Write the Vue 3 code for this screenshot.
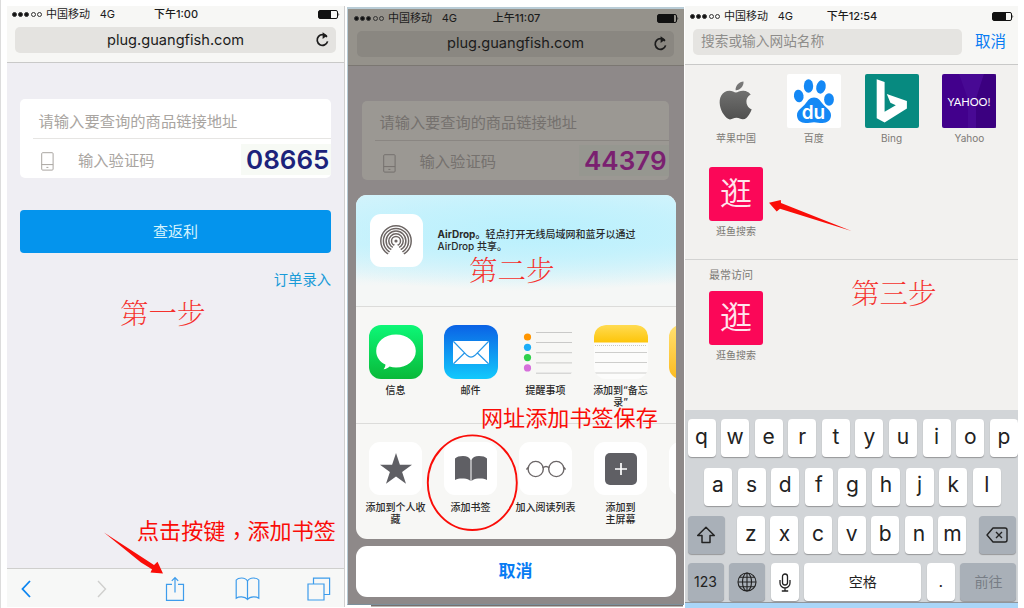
<script setup>
const rows = ['qwertyuiop', 'asdfghjkl', 'zxcvbnm'].map((r) => r.split(''))
const phones = [
  { key: 'first', time: '下午1:00', code: '08665', level: 12 },
  { key: 'second', time: '上午11:07', code: '44379', level: 16 },
]
const rings = [4.5, 7.2, 9.9, 12.6, 15.2]
const dotColors = ['#ff9500', '#1badf8', '#2fd04b', '#d66fdb']
</script>

<template>
  <div class="page">
    <section v-for="p in phones" :key="p.key" class="phone" :class="p.key">
      <header class="top">
        <div class="status">
          <div class="carrier">
            <i class="dot full"></i><i class="dot full"></i><i class="dot full"></i><i class="dot"></i><i class="dot"></i>
            <span class="name">中国移动</span><span>4G</span>
          </div>
          <span class="time">{{ p.time }}</span>
          <svg class="battery" width="22" height="9" viewBox="0 0 22 9">
            <rect x=".5" y=".5" width="19" height="8" rx="1.5" fill="none" stroke="currentColor" />
            <rect x="1" y="1" :width="p.level" height="7" fill="currentColor" />
            <path d="M20.5 2.8q1.5 1.7 0 3.4z" fill="currentColor" />
          </svg>
        </div>
        <div class="address">
          <span>plug.guangfish.com</span>
          <svg class="reload" width="15" height="16" viewBox="0 0 15 16">
            <path d="M11.9 5.1A5.3 5.3 0 1 0 12.6 9.4" fill="none" stroke="currentColor" stroke-width="1.7" />
            <path d="M7.6.2 12.3 3.6 7.6 7z" fill="currentColor" />
          </svg>
        </div>
      </header>
      <main class="content">
        <div class="form">
          <div class="field link">请输入要查询的商品链接地址</div>
          <div class="field verify">
            <svg width="13" height="19" viewBox="0 0 13 19" fill="none" stroke="currentColor">
              <rect x=".7" y=".7" width="11.4" height="17.4" rx="1" /><path d="M.7 12.6h11.4M5.4 15.4h2" />
            </svg>
            <span>输入验证码</span>
            <b class="captcha">{{ p.code }}</b>
          </div>
        </div>
        <template v-if="p.key === 'first'">
          <div class="submit">查返利</div>
          <div class="order">订单录入</div>
        </template>
      </main>
      <nav v-if="p.key === 'first'" class="toolbar">
        <svg width="10" height="18" viewBox="0 0 10 18"><path d="M9 1 1.5 9 9 17" fill="none" stroke="#0a84f0" stroke-width="1.8" /></svg>
        <svg class="forward" width="10" height="18" viewBox="0 0 10 18"><path d="M1 1 8.5 9 1 17" fill="none" stroke="#cfcfcd" stroke-width="1.4" /></svg>
        <svg class="share" width="20" height="26" viewBox="0 0 20 26" fill="none" stroke="#3d9cec" stroke-width="1.2"><path d="M7 8.3H1.5V24.4h17V8.3H13M10 16.5V1.5M6.8 4.8 10 1.5l3.2 3.3" /></svg>
        <svg class="book" width="25" height="24" viewBox="0 0 25 24" fill="none" stroke="#3d9cec" stroke-width="1.2"><path d="M12.5 4.2C11.2 1.5 9 1 6.6 1S2.2 1.7 1.2 3v18.2c1.4-1 3.4-1.4 5.4-1.3 2.5.1 4.6.8 5.9 2.6 1.3-1.8 3.4-2.5 5.9-2.6 2-.1 4 .3 5.4 1.3V3c-1-1.3-3-2-5.4-2s-4.6.5-5.900 3.200zV22" /></svg>
        <svg class="tabs" width="24" height="24" viewBox="0 0 24 24" fill="none" stroke="#3d9cec" stroke-width="1.2"><path d="M1 7h16v16H1zM6.500 7V1.200H22.600V17.500H17" /></svg>
      </nav>

      <div v-if="p.key === 'second'" class="overlay">
        <div class="sheet">
          <div class="airdrop">
            <div class="tile">
              <svg width="36" height="36" viewBox="-18 -18 36 36" fill="none" stroke="#6d6664" stroke-width="1.500">
                <circle v-for="r in rings" :key="r" :r="r" />
                <path d="M0 2 11.500 18H-11.500z" fill="#fff" stroke="none" />
                <circle r="1.600" fill="#6d6664" stroke="none" />
              </svg>
            </div>
            <p><b>AirDrop。</b>轻点打开无线局域网和蓝牙以通过<br />AirDrop 共享。</p>
          </div>
          <div class="apps">
            <div class="app">
              <div class="icon messages">
                <svg width="54" height="54" viewBox="0 0 54 54"><path d="M27 9.500c11.300 0 19.800 7.200 19.800 16.500S38.300 42.500 27 42.500c-2.400 0-4.500-.3-6.400-.9-1.600 1.600-3.400 2.500-6 2.600 1.200-1.300 1.900-2.700 1.800-4.600C10.800 36.900 7.200 31.800 7.200 26 7.200 16.700 15.700 9.500 27 9.500z" fill="#fff" /></svg>
              </div>
              <span>信息</span>
            </div>
            <div class="app">
              <div class="icon mail">
                <svg width="54" height="54" viewBox="0 0 54 54"><rect x="9" y="16" width="36" height="23" rx="1.500" fill="#fff" /><path d="M9.500 16.500 23 30.300q4 3.500 8 0L44.500 16.500M9.500 38.700 20.500 28M44.500 38.700 33.500 28" fill="none" stroke="#2596e8" stroke-width="1.200" /></svg>
              </div>
              <span>邮件</span>
            </div>
            <div class="app">
              <div class="icon">
                <svg width="54" height="54" viewBox="0 0 54 54">
                  <circle v-for="(c, i) in dotColors" :key="c" cx="8.500" :cy="12 + i * 10.300" r="3.600" :fill="c" />
                  <path d="M17 7.500h36M17 17.500h36M17 27.700h36M17 37.900h36M17 48.200h36" stroke="#c9c9c8" />
                </svg>
              </div>
              <span>提醒事项</span>
            </div>
            <div class="app">
              <div class="icon notes">
                <svg width="54" height="54" viewBox="0 0 54 54"><path d="M0 17.500V12Q0 0 12 0H42Q54 0 54 12v5.500z" fill="url(#memo)" /><path d="M1 27.500h52M1 37.500h52M1 48h52" stroke="#cececc" /><path d="M1 20.500h52" stroke="#c6c6c4" stroke-dasharray="1 1" /><defs><linearGradient id="memo" x2="0" y2="1"><stop stop-color="#ffdb52" /><stop offset="1" stop-color="#fdc509" /></linearGradient></defs></svg>
              </div>
              <span>添加到“备忘<br />录”</span>
            </div>
            <div class="app"><div class="icon folder"></div></div>
          </div>
          <div class="apps actions">
            <div class="app">
              <div class="tile"><svg width="32" height="31" viewBox="0 0 32 31"><path d="m16 0 3.900 11.700H32l-9.900 7.200 3.900 11.800-10-7.300-10 7.300 3.900-11.800L0 11.700h12.100z" fill="#5f5f64" /></svg></div>
              <span>添加到个人收<br />藏</span>
            </div>
            <div class="app">
              <div class="tile"><svg width="32" height="26" viewBox="0 0 32 26" fill="#5f5f64"><path d="M15.500 25V4C14.500 1.500 12 0 8 0 4.500 0 1.500.8 0 2.500V24c3-1.500 6-1.800 9-1.400 2.800.3 5 .9 6.500 2.400zM16.500 25V4c1-2.500 3.500-4 7.500-4 3.500 0 6.500.8 8 2.500V24c-3-1.500-6-1.800-9-1.400-2.800.3-5 .9-6.500 2.400z" /></svg></div>
              <span>添加书签</span>
            </div>
            <div class="app">
              <div class="tile"><svg width="40" height="18" viewBox="0 0 40 18" fill="none" stroke="#6b6667" stroke-width="1.400"><circle cx="9.700" cy="9" r="7.600" /><circle cx="30.300" cy="9" r="7.600" /><path d="M16.800 8q3.200-3 6.400 0M2 7.500.5 9.500M38 7.500l1.500 2" /></svg></div>
              <span>加入阅读列表</span>
            </div>
            <div class="app">
              <div class="tile"><svg width="32" height="32" viewBox="0 0 32 32"><rect width="32" height="32" rx="5" fill="#5f5f64" /><path d="M16 10v12M10 16h12" stroke="#fff" stroke-width="1.700" /></svg></div>
              <span>添加到<br />主屏幕</span>
            </div>
            <div class="app"><div class="tile"></div></div>
          </div>
        </div>
        <div class="cancel">取消</div>
      </div>
    </section>

    <section class="phone third">
      <header class="top">
        <div class="status">
          <div class="carrier">
            <i class="dot full"></i><i class="dot full"></i><i class="dot full"></i><i class="dot"></i><i class="dot"></i>
            <span class="name">中国移动</span><span>4G</span>
          </div>
          <span class="time">下午12:54</span>
          <svg class="battery" width="22" height="9" viewBox="0 0 22 9">
            <rect x=".5" y=".5" width="19" height="8" rx="1.500" fill="none" stroke="currentColor" />
            <rect x="1" y="1" width="13" height="7" fill="currentColor" />
            <path d="M20.500 2.800q1.500 1.700 0 3.400z" fill="currentColor" />
          </svg>
        </div>
        <div class="searchbar"><div class="search">搜索或输入网站名称</div><span>取消</span></div>
      </header>
      <div class="favorites">
        <div class="site">
          <svg width="54" height="54" viewBox="0 0 54 54">
            <defs><linearGradient id="steel" x2="0" y2="1"><stop stop-color="#7b7b7a" /><stop offset="1" stop-color="#50504f" /></linearGradient></defs>
            <path transform="translate(7 7.500) scale(1.640 1.580)" fill="url(#steel)" d="M12.152 6.896c-.948 0-2.415-1.078-3.960-1.040-2.040.027-3.910 1.183-4.961 3.014-2.117 3.675-.546 9.103 1.519 12.090 1.013 1.454 2.208 3.090 3.792 3.039 1.520-.065 2.090-.987 3.935-.987 1.831 0 2.350.987 3.960.948 1.637-.026 2.676-1.480 3.676-2.948 1.156-1.688 1.636-3.325 1.662-3.415-.039-.013-3.182-1.221-3.220-4.857-.026-3.040 2.480-4.494 2.597-4.559-1.429-2.090-3.623-2.324-4.390-2.376-2-.156-3.675 1.090-4.610 1.090zM15.530 3.830c.843-1.012 1.400-2.427 1.245-3.830-1.207.052-2.662.805-3.532 1.818-.780.896-1.454 2.338-1.273 3.714 1.338.104 2.715-.688 3.560-1.702" />
          </svg>
          <span>苹果中国</span>
        </div>
        <div class="site">
          <svg width="54" height="54" viewBox="0 0 54 54">
            <rect width="54" height="54" rx="2" fill="#fff" />
            <g fill="#1488f5">
              <ellipse cx="21.500" cy="12" rx="4.700" ry="6.700" /><ellipse cx="34" cy="13" rx="4.700" ry="6.700" transform="rotate(12 34 13)" />
              <ellipse cx="11.700" cy="22" rx="4.800" ry="6.300" transform="rotate(-10 11.700 22)" /><ellipse cx="42" cy="25.500" rx="4.900" ry="6.200" />
              <path d="M27 23.500c4.500 0 6.200 3.300 8.800 6.600 2.700 3.400 8.200 6 8.200 11.200 0 5-3.800 7.700-8.500 7.700-3.500 0-5.500-.8-8.500-.8s-5 .8-8.500.8c-4.700 0-8.500-2.700-8.500-7.700 0-5.200 5.500-7.800 8.200-11.200 2.600-3.300 4.300-6.600 8.800-6.600z" />
            </g>
            <text x="26.500" y="45" text-anchor="middle" class="du">du</text>
          </svg>
          <span>百度</span>
        </div>
        <div class="site">
          <svg width="54" height="54" viewBox="0 0 54 54"><rect width="54" height="54" rx="2" fill="#078a80" /><path d="M11.700 5.300 19.600 8.100V37.800L30.800 31.300 25.400 28.800 21.800 20 41.900 27V34.500L19.600 48.600 11.700 44.200z" fill="#fff" /></svg>
          <span>Bing</span>
        </div>
        <div class="site">
          <svg width="54" height="54" viewBox="0 0 54 54"><rect width="54" height="54" rx="2" fill="#42008c" /><path d="M17 0 26 25V54H34V25L42 0z" fill="#4d0f99" opacity=".6" /><path d="M34 25 42 0H54V54H34z" fill="#370078" opacity=".6" /><text x="27" y="31.500" text-anchor="middle" class="yahoo" textLength="43" lengthAdjust="spacingAndGlyphs">YAHOO!</text></svg>
          <span>Yahoo</span>
        </div>
        <div class="site"><div class="guang">逛</div><span>逛鱼搜索</span></div>
      </div>
      <div class="frequent">
        <h3>最常访问</h3>
        <div class="site"><div class="guang">逛</div><span>逛鱼搜索</span></div>
      </div>
      <div class="keyboard">
        <div class="keys"><span v-for="k in rows[0]" :key="k" class="keycap">{{ k }}</span></div>
        <div class="keys middle"><span v-for="k in rows[1]" :key="k" class="keycap">{{ k }}</span></div>
        <div class="keys third-row">
          <span class="keycap dark shift"><svg width="20" height="18" viewBox="0 0 20 18"><path d="M10 1.200 18.300 9.500H14V16.500H6V9.500H1.700z" fill="none" stroke="#222" stroke-width="1.500" stroke-linejoin="round" /></svg></span>
          <div class="letters"><span v-for="k in rows[2]" :key="k" class="keycap">{{ k }}</span></div>
          <span class="keycap dark shift"><svg width="22" height="16" viewBox="0 0 22 16" fill="none" stroke="#222" stroke-width="1.400"><path d="M7 1h12q2 0 2 2v10q0 2-2 2H7L1 8z" stroke-linejoin="round" /><path d="m10 5 6 6m0-6-6 6" /></svg></span>
        </div>
        <div class="keys bottom">
          <span class="keycap dark num">123</span>
          <span class="keycap dark globe"><svg width="20" height="20" viewBox="0 0 20 20" fill="none" stroke="#222" stroke-width="1.100"><circle cx="10" cy="10" r="9" /><ellipse cx="10" cy="10" rx="4.500" ry="9" /><path d="M10 1v18M1 10h18M2.500 5.200h15M2.500 14.800h15" /></svg></span>
          <span class="keycap"><svg width="12" height="19" viewBox="0 0 12 19" fill="none" stroke="#222" stroke-width="1.300"><rect x="3.500" y="1" width="5" height="11" rx="2.500" /><path d="M1 7v3a5 5 0 0 0 10 0V7M6 15v3M2.800 18h6.400" /></svg></span>
          <span class="keycap space">空格</span>
          <span class="keycap period">.</span>
          <span class="keycap dark go">前往</span>
        </div>
      </div>
    </section>

    <div class="notes-layer">
      <svg width="1024" height="608" viewBox="0 0 1024 608" fill="#fa0d08">
        <path d="M371 605h312v1.500H371z" fill="#77706c" />
        <path d="M104 532.500 154 565 157.500 561.800 163 573.500 150.500 572.500 152 569.300 141 562.500z" />
        <path d="M851.500 231 781 203 780.800 200 769 202.700 776.700 211.500 780 208.800z" />
        <ellipse cx="472.300" cy="482.700" rx="44.500" ry="47.300" fill="none" stroke="#fa0d08" stroke-width="1.900" />
      </svg>
      <p class="step one">第一步</p>
      <p class="step two">第二步</p>
      <p class="step three">第三步</p>
      <p class="tip press">点击按键<span class="comma">，</span>添加书签</p>
      <p class="tip save">网址添加书签保存</p>
    </div>
  </div>
</template>

<style>
body { margin: 0; background: #fff; }
</style>

<style scoped>
* { box-sizing: border-box; }
svg { display: block; flex: none; }
p, h3 { margin: 0; }
.page { position: relative; width: 1024px; height: 608px; overflow: hidden; display: flex; padding: 6px 0 0 6px; background: #fff; border-left: 1px solid #dcdcdc; font-family: Inter, "Noto Sans CJK SC", sans-serif; color: #1c1c1c; }
.phone { position: relative; flex: none; display: flex; flex-direction: column; overflow: hidden; }
.first { width: 338px; height: 601px; background: #efeef3; border-right: 1px solid #cfcfcf; }
.second { width: 337px; height: 598px; margin: 1px 0 0 2px; background: #8e8989; border: solid #b9ccd6; border-width: 2px 0 0 1px; border-bottom: 1px solid #7c8f9b; }
.third { width: 333px; height: 602px; background: #f2f1ef; border-bottom: 5px solid #a9d5f7; margin-left: 1px; }
.top { height: 57px; flex: none; background: #f7f7f5; border-bottom: 1px solid #c9c9c8; }
.status { height: 16px; display: grid; grid-template-columns: 1fr auto 1fr; align-items: center; padding: 0 4px 0 5px; font-size: 11px; line-height: 16px; }
.carrier { display: flex; align-items: center; gap: 1.200px; }
.name { margin: 0 8.500px 0 3px; }
.dot { width: 5px; height: 5px; border: 1px solid #333; border-radius: 50%; }
.full { background: #111; }
.time { font-weight: 500; }
.battery { justify-self: end; color: #111; }
.address { position: relative; height: 26px; margin: 5px 8px 0; border-radius: 5px; background: #e4e3e0; text-align: center; font-size: 14.600px; line-height: 26px; }
.reload { position: absolute; right: 6px; top: 5px; }
.content { flex: 1; padding: 36px 13px 0 13px; }
.form { height: 79px; border-radius: 5px; background: #fff; color: #a9a5a1; overflow: hidden; }
.field { display: flex; align-items: center; font-size: 15.300px; }
.link { height: 40px; margin-left: 13px; padding: 2px 0 0 5.500px; border-bottom: 1px solid #e6e5e3; }
.verify { height: 39px; padding: 5px 0 0 21px; }
.verify span { margin: -5px 0 0 24px; }
.captcha { margin: -3px 0 0 auto; padding-left: 5px; width: 90px; height: 31px; background: #f7faf5; color: #1c237b; font: 600 26px/31px Inter, sans-serif; }
.submit { margin-top: 32px; height: 43px; border-radius: 4px; background: #0494ed; color: #d5f3fd; text-align: center; font-size: 15px; line-height: 43px; }
.order { margin-top: 17px; text-align: right; color: #199bd8; font-size: 14.300px; line-height: 20px; }
.toolbar { height: 39px; flex: none; display: flex; align-items: center; padding: 1px 0 0 14px; border-top: 1px solid #cfcfcd; background: #f7f8f7; }
.forward { margin-left: 66px; }
.share { margin-left: 58px; }
.book { margin-left: 50px; }
.tabs { margin-left: 47px; }

.second .top { background: #95928b; border-color: #7b7772; height: 57px; }
.second .status { height: 18px; padding-right: 5px; padding-left: 6px; }
.second .address { background: #8a8781; margin: 4px 10px 0 9px; line-height: 25px; }
.second .content { padding: 35px 15px 0 13.500px; }
.second .form { background: #9b9893; color: #75716e; height: 79px; }
.second .link { border-color: #8a8682; padding: 1px 0 0 5px; font-size: 15.200px; }
.second .verify span { margin-top: -6px; }
.second .captcha { background: #969790; color: #7a2070; margin-top: -5px; }
.overlay { position: absolute; left: 7.500px; top: 186px; width: 320px; color: #2a2a2a; }
.sheet { height: 344px; border-radius: 11px; overflow: hidden; background: #f7f7f5; }
.airdrop { height: 112px; display: flex; gap: 15px; padding: 19px 0 0 14px; background: radial-gradient(ellipse 95% 60px at 55% 36px, #b9f0fd 0, rgba(190, 241, 253, .75) 45%, rgba(220, 245, 252, 0) 100%), linear-gradient(#d9f4fb 0, #d3f3fb 45%, #f5f7f6 82%); border-bottom: 1px solid #dcdcda; }
.airdrop p { padding-top: 15px; font-size: 10px; line-height: 11.500px; font-weight: 500; }
.tile { width: 53px; height: 53px; flex: none; display: flex; align-items: center; justify-content: center; border-radius: 11px; background: #fff; }
.apps { height: 117px; display: flex; padding: 18px 0 0 2.500px; border-bottom: 1px solid #dcdcda; }
.apps.actions { height: 115px; border: 0; }
.app { width: 75px; flex: none; display: flex; flex-direction: column; align-items: center; font-size: 10px; line-height: 11.500px; font-weight: 500; text-align: center; }
.app span { margin-top: 6px; }
.actions .app span { margin-top: 7px; }
.icon { width: 54px; height: 54px; border-radius: 12px; overflow: hidden; }
.messages { background: linear-gradient(#0df777, #09b939); }
.mail { background: linear-gradient(#0b62e5, #12c9fc); }
.notes { background: #fcfcfb; }
.folder { background: linear-gradient(#ffe070, #fcbb20); }
.cancel { margin-top: 7px; height: 51px; border-radius: 11px; background: #fff; color: #087cf3; text-align: center; font-size: 17px; line-height: 51px; font-weight: 600; }

.third .top { height: 59px; }
.third .status { height: 20px; }
.searchbar { display: flex; align-items: center; margin: 3px 12px 0 8px; }
.search { width: 269px; height: 26px; padding-left: 8px; border-radius: 5px; background: #e5e4e1; color: #8e8d8a; font-size: 13.700px; line-height: 25px; }
.searchbar span { margin-left: auto; color: #087cf3; font-size: 15.500px; line-height: 26px; }
.favorites { height: 195px; flex: none; padding: 9px 0 0 12px; display: grid; grid-template-columns: repeat(4, 77.800px); grid-template-rows: 92.500px 90px; border-bottom: 1px solid #d3d3d2; }
.site { width: 78px; display: flex; flex-direction: column; align-items: center; font-size: 10px; line-height: 12px; color: #7c7975; }
.site span { margin-top: 4px; }
.guang { width: 54px; height: 54px; border-radius: 3px; background: #fb0758; color: #ffe5ec; text-align: center; font-size: 32px; line-height: 53px; font-weight: 350; }
.du { font: 600 19px Inter, sans-serif; fill: #fff; }
.yahoo { font: 400 12px Lato, sans-serif; fill: #fff; }
.frequent { flex: 1; padding: 7px 0 0 12px; }
.frequent h3 { margin: 0 0 8px 12px; color: #7c7975; font-size: 11px; line-height: 16px; font-weight: 400; }
.keyboard { height: 193px; flex: none; display: flex; flex-direction: column; padding: 9px 0 0 2.500px; background: #d2d5d8; border-bottom: 1px solid #8f959b; }
.keys { display: flex; gap: 5.600px; height: 38px; margin-bottom: 10.500px; }
.keycap { width: 28px; height: 38px; flex: none; display: flex; align-items: center; justify-content: center; border-radius: 4px; background: #fff; box-shadow: 0 1px 1px #96979a; font-size: 21px; line-height: 34px; padding-bottom: 3px; color: #222; }
.middle { padding-left: 16.500px; }
.third-row { gap: 12.400px; }
.letters { display: flex; gap: 5.600px; }
.dark { background: #a9b0b8; padding-bottom: 0; }
.shift { width: 37px; }
.bottom { margin: -1.500px 0 0; }
.bottom .keycap { padding-bottom: 0; }
.bottom .num { width: 36px; font-size: 14px; }
.bottom .globe { width: 36px; }
.bottom .space { width: 117px; font-size: 14px; }
.bottom .go { width: 56px; font-size: 14px; color: #777d85; }
.bottom .period { font-size: 16px; padding-bottom: 3px; }

.notes-layer { position: absolute; left: -1px; top: 0; width: 1024px; height: 608px; color: #fa0d08; }
.step, .tip { position: absolute; white-space: nowrap; }
.step { font-size: 28.500px; line-height: 34px; font-weight: 200; font-family: "Noto Serif CJK SC", "Noto Sans CJK SC", serif; color: #f5302c; }
.one { left: 120px; top: 295px; }
.two { left: 469px; top: 252px; }
.three { left: 851px; top: 275px; }
.tip { font-size: 22.100px; line-height: 28px; }
.comma { position: relative; left: 6px; top: -2px; }
.press { left: 137px; top: 517px; }
.save { left: 481px; top: 404px; }
</style>
